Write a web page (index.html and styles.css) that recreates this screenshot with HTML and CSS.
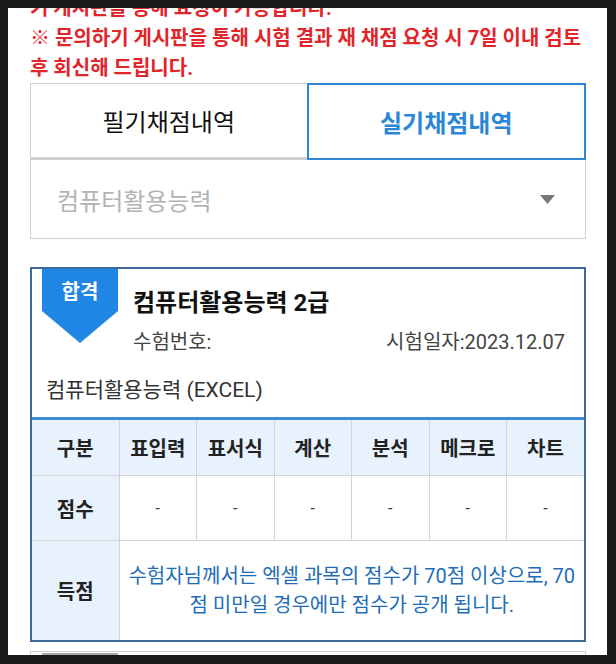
FILE: index.html
```html
<!DOCTYPE html>
<html lang="ko">
<head>
<meta charset="utf-8">
<title>채점내역</title>
<link rel="stylesheet" href="styles.css">
</head>
<body>
<div class="screen">
  <div class="notice">
    <p class="cut">기 게시판을 통해 요청이 가능합니다.</p>
    <p>※ 문의하기 게시판을 통해 시험 결과 재 채점 요청 시 7일 이내 검토<br>후 회신해 드립니다.</p>
  </div>

  <div class="tabs">
    <div class="tab">필기채점내역</div>
    <div class="tab active">실기채점내역</div>
  </div>

  <div class="select">
    <span class="select-label">컴퓨터활용능력</span>
    <svg class="caret" width="15" height="9" viewBox="0 0 15 9"><polygon points="0,0 15,0 7.5,9" fill="#777"/></svg>
  </div>

  <div class="card">
    <div class="card-head">
      <div class="badge"><span>합격</span></div>
      <div class="head-main">
        <h2 class="title">컴퓨터활용능력 2급</h2>
        <div class="meta">
          <span>수험번호:</span>
          <span>시험일자:2023.12.07</span>
        </div>
      </div>
      <div class="subject">컴퓨터활용능력 (EXCEL)</div>
    </div>
    <table class="scores">
      <colgroup>
        <col class="col-first">
        <col><col><col><col><col><col>
      </colgroup>
      <tr class="row-head">
        <th>구분</th><th>표입력</th><th>표서식</th><th>계산</th><th>분석</th><th>메크로</th><th>차트</th>
      </tr>
      <tr class="row-score">
        <th>점수</th><td>-</td><td>-</td><td>-</td><td>-</td><td>-</td><td>-</td>
      </tr>
      <tr class="row-note">
        <th>득점</th>
        <td colspan="6" class="note">수험자님께서는 엑셀 과목의 점수가 70점 이상으로, 70<br>점 미만일 경우에만 점수가 공개 됩니다.</td>
      </tr>
    </table>
  </div>

  <div class="card next">
    <div class="badge gray"></div>
  </div>
</div>
</body>
</html>
```

FILE: styles.css
```css
* { box-sizing: border-box; }

html, body {
  margin: 0;
  padding: 0;
  background: #1b1b1b;
}

body {
  font-family: "Roboto", "Noto Sans CJK KR", sans-serif;
  color: #222;
  width: 616px;
  height: 664px;
  overflow: hidden;
}

.screen {
  margin: 8px 0 0 8px;
  width: 599px;
  height: 647px;
  background: #fff;
  overflow: hidden;
  padding: 0 21px 0 22px;
}

.notice {
  margin-top: -15px;
  color: #e0252b;
  font-weight: 700;
  font-size: 20px;
  line-height: 30px;
}

.notice p {
  margin: 0;
  white-space: nowrap;
}

.tabs {
  display: flex;
  height: 77px;
}

.tab {
  flex: 1;
  display: flex;
  align-items: center;
  justify-content: center;
  font-size: 24px;
  color: #111;
  border-top: 1px solid #cfcfcf;
  border-left: 1px solid #cfcfcf;
  border-bottom: 3px solid #cfcfcf;
}

.tab.active {
  border: 2px solid #2f86d4;
  color: #2a86d6;
  font-weight: 700;
}

.select {
  display: flex;
  align-items: center;
  justify-content: space-between;
  height: 79px;
  border: 1px solid #cfcfcf;
  border-top: 0;
  padding: 0 30px 0 26px;
}

.select-label {
  font-size: 24px;
  color: #b3b3b3;
}

.card {
  margin-top: 28px;
  border: 2px solid #3b6a98;
}

.card-head {
  position: relative;
  padding: 18px 0 13px 0;
}

.badge {
  position: absolute;
  left: 10px;
  top: 0;
  width: 76px;
  height: 74px;
  background: #1f86e5;
  clip-path: polygon(0 0, 100% 0, 100% 42px, 50% 100%, 0 42px);
  color: #fff;
  font-weight: 700;
  font-size: 20px;
  text-align: center;
  padding-top: 10px;
  line-height: 26px;
}

.head-main {
  padding: 0 19px 0 101px;
}

.title {
  margin: 0;
  font-size: 24px;
  font-weight: 700;
  line-height: 32px;
  color: #111;
}

.meta {
  display: flex;
  justify-content: space-between;
  margin-top: 9px;
  font-size: 20px;
  line-height: 28px;
  color: #444;
}

.subject {
  margin: 20px 0 0 14px;
  font-size: 21px;
  line-height: 28px;
  color: #333;
}

.scores {
  width: 100%;
  border-collapse: collapse;
  table-layout: fixed;
  border-top: 3px solid #3f8bd8;
}

.col-first { width: 87px; }

.scores th,
.scores td {
  border: 1px solid #d4d4d4;
  text-align: center;
  padding: 0;
}

.scores tr > :first-child { border-left: 0; }
.scores tr > :last-child { border-right: 0; }
.scores tr:last-child > * { border-bottom: 0; }

.scores th {
  background: #e7f2fd;
  font-size: 20px;
  font-weight: 700;
  color: #222;
}

.row-head { height: 57px; }
.row-score { height: 65px; }
.row-note { height: 99px; }

.row-score td {
  font-size: 16px;
  color: #333;
}

.scores td.note {
  color: #1e6db6;
  font-size: 20px;
  line-height: 29px;
  padding-top: 2px;
}

.card.next {
  margin-top: 9px;
  height: 40px;
  border: 1px solid #cfcfcf;
  position: relative;
}

.badge.gray {
  background: #a8a8a8;
  left: 11px;
  top: 1px;
}
```
